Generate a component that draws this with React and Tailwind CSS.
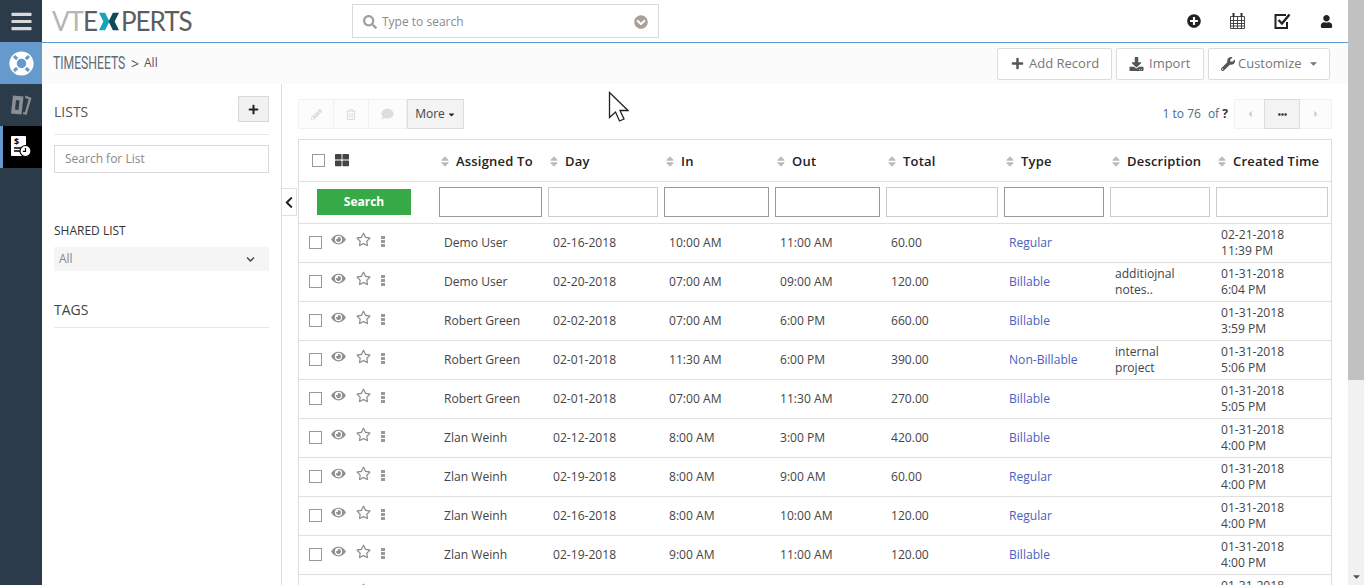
import React from "react";
import {
  FaBars, FaPlus, FaDownload, FaWrench, FaCaretDown, FaPencilAlt, FaRegTrashAlt, FaComment,
  FaEye, FaRegStar, FaEllipsisH, FaThLarge, FaChevronLeft, FaSearch, FaChevronCircleDown,
  FaPlusCircle, FaUser, FaLifeRing, FaCaretLeft, FaCaretRight, FaSort, FaChevronDown,
} from "react-icons/fa";

const font = "font-['Open_Sans',sans-serif]";
const cols = "grid grid-cols-[135px_109px_116px_111px_111px_118px_106px_106px_120px]";

const headers = ["Assigned To", "Day", "In", "Out", "Total", "Type", "Description", "Created Time"];

const rows = [
  ["Demo User", "02-16-2018", "10:00 AM", "11:00 AM", "60.00", "Regular", "", "02-21-2018", "11:39 PM"],
  ["Demo User", "02-20-2018", "07:00 AM", "09:00 AM", "120.00", "Billable", "additiojnal notes..", "01-31-2018", "6:04 PM"],
  ["Robert Green", "02-02-2018", "07:00 AM", "6:00 PM", "660.00", "Billable", "", "01-31-2018", "3:59 PM"],
  ["Robert Green", "02-01-2018", "11:30 AM", "6:00 PM", "390.00", "Non-Billable", "internal project", "01-31-2018", "5:06 PM"],
  ["Robert Green", "02-01-2018", "07:00 AM", "11:30 AM", "270.00", "Billable", "", "01-31-2018", "5:05 PM"],
  ["Zlan Weinh", "02-12-2018", "8:00 AM", "3:00 PM", "420.00", "Billable", "", "01-31-2018", "4:00 PM"],
  ["Zlan Weinh", "02-19-2018", "8:00 AM", "9:00 AM", "60.00", "Regular", "", "01-31-2018", "4:00 PM"],
  ["Zlan Weinh", "02-16-2018", "8:00 AM", "10:00 AM", "120.00", "Regular", "", "01-31-2018", "4:00 PM"],
  ["Zlan Weinh", "02-19-2018", "9:00 AM", "11:00 AM", "120.00", "Billable", "", "01-31-2018", "4:00 PM"],
  ["Zlan Weinh", "02-19-2018", "9:00 AM", "11:00 AM", "120.00", "Billable", "", "01-31-2018", "4:00 PM"],
];

const Sidebar = () => (
  <div className="w-[42px] shrink-0 bg-[#2c3b49] flex flex-col">
    <div className="h-[42px] flex items-center justify-center text-[#d9d9d9]">
      <FaBars className="w-[23px] h-[23px]" />
    </div>
    <div className="h-[42px] bg-[#6699cc] flex items-center justify-center text-white">
      <FaLifeRing className="w-[25px] h-[25px]" />
    </div>
    <div className="h-[42px] flex items-center justify-center">
      <svg width="22" height="22" viewBox="0 0 22 22">
        <path fillRule="evenodd" d="M3 1.5L13.5 2.5L11.5 20.5L1 19.5zM6 6L9.5 6.5L8.5 16L5 15.5z" fill="#8a8f94" />
        <path d="M15.5 1.5L21.5 4L16.5 21L12.8 20L13.5 18L15 18.3L18.6 5.2L15 4z" fill="#8a8f94" />
      </svg>
    </div>
    <div className="h-[42px] bg-black border-l-[3px] border-[#6699cc] flex items-center justify-center pr-[3px]">
      <svg width="22" height="22" viewBox="0 0 22 22">
        <rect x="1" y="0" width="15" height="20" rx="1" fill="#fff" />
        <text x="4" y="9" fontSize="9" fontWeight="700" fontFamily="Open Sans" fill="#000">$</text>
        <path d="M4 12h8M4 15h8" stroke="#000" strokeWidth="1.6" />
        <circle cx="15.5" cy="15" r="5.5" fill="#fff" stroke="#000" strokeWidth="1.2" />
        <path d="M15.5 12v3.4h-2.6" fill="none" stroke="#000" strokeWidth="1.2" />
      </svg>
    </div>
  </div>
);

const TopBar = () => (
  <div className="h-[43px] border-b border-[#5b99cc] bg-white flex items-center shrink-0">
    <div className="w-[310px] pl-[10px] flex items-center text-[26px] leading-none font-['Lato',sans-serif] tracking-[-1px]">
      <span className="text-[#b5b5b5]">VT</span>
      <span className="text-[#5b5e61]">E</span>
      <svg width="20" height="19" viewBox="0 0 23 20" className="mx-[2px]">
        <path d="M0 0h7l5 10-5 10H0l5-10z" fill="#19a3b5" />
        <path d="M23 0h-7l-5 10 5 10h7l-5-10z" fill="#0e4a5c" />
      </svg>
      <span className="text-[#5b5e61]">PERTS</span>
    </div>
    <div className="w-[307px] h-[34px] border border-[#d9d9d9] flex items-center pl-[10px] pr-[10px] pt-[1px]">
      <FaSearch className="w-[14px] h-[14px] text-[#a0a0a0]" />
      <span className="ml-[5px] text-[12px] text-[#8a8a8a] flex-1">Type to search</span>
      <FaChevronCircleDown className="w-[14px] h-[14px] text-[#a89f97]" />
    </div>
    <div className="ml-auto flex items-center gap-[29px] pr-[15px] text-[#222]">
      <FaPlusCircle className="w-[14px] h-[14px]" />
      <svg width="15" height="16" viewBox="0 0 15 16" fill="none" stroke="#333">
        <path d="M.5 3.5h14v12H.5zM.5 7.5h14M.5 10.5h14M.5 13h14M3.5 3.5v12M7.5 3.5v12M11.5 3.5v12" strokeWidth="0.9" />
        <path d="M3.5 0v4M11.5 0v4" strokeWidth="2" />
      </svg>
      <svg width="17" height="17" viewBox="0 0 17 17" fill="none" stroke="#222">
        <path d="M13 9v6H1.5V2H12" strokeWidth="2" />
        <path d="M4.5 7l3.5 3.5L15.5 1.5" strokeWidth="2.4" />
      </svg>
      <FaUser className="w-[13px] h-[13px]" />
    </div>
  </div>
);

const Crumbs = () => (
  <div className="h-[41px] bg-[#fbfbfb] flex items-center pl-[11px] pr-[18px] shrink-0">
    <span className="w-[72px] whitespace-nowrap origin-left scale-x-[0.64] font-['Roboto',sans-serif] text-[19px] text-[#5f6b77]">TIMESHEETS</span>
    <span className="ml-[6px] text-[14px] text-[#555]">&gt;</span>
    <span className="ml-[5px] mb-[2px] text-[12px] text-[#555]">All</span>
    <div className="ml-auto flex items-center gap-[4px]">
      <div className="h-[32px] w-[115px] pl-[13px] border border-[#dcdcdc] rounded-[2px] bg-white flex items-center gap-[5px] text-[13px] text-[#777]">
        <FaPlus className="w-[13px] h-[13px] text-[#555]" />
        <span>Add Record</span>
      </div>
      <div className="h-[32px] w-[88px] pl-[12px] border border-[#dcdcdc] rounded-[2px] bg-white flex items-center gap-[5px] text-[13px] text-[#777]">
        <FaDownload className="w-[15px] h-[14px] text-[#555]" />
        <span>Import</span>
      </div>
      <div className="h-[32px] w-[122px] pl-[12px] border border-[#dcdcdc] rounded-[2px] bg-white flex items-center gap-[3px] text-[13px] text-[#777]">
        <FaWrench className="w-[14px] h-[14px] text-[#555]" />
        <span>Customize</span>
        <FaCaretDown className="w-[11px] h-[11px] ml-[3px]" />
      </div>
    </div>
  </div>
);

const LeftPanel = () => (
  <div className="w-[240px] shrink-0 border-r border-[#dedede] pl-[12px] pr-[12px] pt-[12px]">
    <div className="flex items-start justify-between border-b border-[#e8e8e8] h-[39px]">
      <span className="text-[14px] text-[#555] mt-[5px]">LISTS</span>
      <div className="w-[31px] h-[26px] bg-[#f1f1f1] border border-[#d8d8d8] flex items-center justify-center">
        <FaPlus className="w-[11px] h-[11px] text-[#222]" />
      </div>
    </div>
    <div className="mt-[10px] h-[28px] border border-[#d9d9d9] flex items-center pl-[10px] text-[12px] text-[#888]">
      Search for List
    </div>
    <div className="mt-[49px] text-[12px] text-[#333] leading-[17px]">SHARED LIST</div>
    <div className="mt-[8px] h-[24px] bg-[#f5f5f5] flex items-center justify-between pl-[5px] pr-[14px] text-[12px] text-[#888]">
      All
      <FaChevronDown className="w-[9px] h-[9px] text-[#444]" />
    </div>
    <div className="mt-[28px] h-[29px] border-b border-[#e8e8e8] text-[14px] text-[#444]">TAGS</div>
  </div>
);

const Toolbar = () => (
  <div className="h-[30px] flex items-center mb-[10px]">
    <div className="flex h-[30px] border border-[#f1f1f1] bg-[#fcfcfc] text-[#dddddd]">
      <div className="w-[35px] flex items-center justify-center border-r border-[#f1f1f1]"><FaPencilAlt className="w-[11px] h-[11px]" /></div>
      <div className="w-[35px] flex items-center justify-center border-r border-[#f1f1f1]"><FaRegTrashAlt className="w-[10px] h-[11px]" /></div>
      <div className="w-[37px] flex items-center justify-center"><FaComment className="w-[13px] h-[12px]" /></div>
    </div>
    <div className="w-[57px] h-[30px] bg-[#f3f3f3] border border-[#dcdcdc] flex items-center justify-center gap-[2px] text-[12px] text-[#444]">
      More <FaCaretDown className="w-[9px] h-[9px] text-[#222]" />
    </div>
    <div className="ml-auto flex items-center text-[12px] text-[#4a6a8a]">
      <span>1 to 76</span>
      <span className="ml-[7px]">of <b className="text-[#333]">?</b></span>
      <div className="ml-[6px] flex h-[30px] border border-[#f1f1f1] bg-[#fcfcfc] text-[#d0d0d0]">
        <div className="w-[29px] flex items-center justify-center"><FaCaretLeft className="w-[10px] h-[10px]" /></div>
        <div className="w-[36px] bg-[#f3f3f3] border border-[#dcdcdc] -my-px flex items-center justify-center text-[#333]"><FaEllipsisH className="w-[9px] h-[9px]" /></div>
        <div className="w-[31px] flex items-center justify-center"><FaCaretRight className="w-[10px] h-[10px]" /></div>
      </div>
    </div>
  </div>
);

const Checkbox = () => <div className="w-[13px] h-[13px] border border-[#999] bg-white" />;

const Dots = () => (
  <div className="flex flex-col gap-[1px]">
    <span className="w-[4px] h-[3px] bg-[#999]" />
    <span className="w-[4px] h-[3px] bg-[#999]" />
    <span className="w-[4px] h-[3px] bg-[#999]" />
  </div>
);

const Row = ({ row }) => {
  const [user, day, from, to, total, type, desc, date, time] = row;
  return (
    <div className={`${cols} h-[39px] border-b border-[#e0e0e0] text-[12.1px] text-[#444] leading-[16px] items-center`}>
      <div className="flex items-center pl-[10px] h-full pb-[1px]">
        <Checkbox />
        <FaEye className="ml-[9px] mb-[6px] w-[15px] h-[13px] text-[#8f8f8f]" />
        <FaRegStar className="ml-[10px] mb-[6px] w-[15px] h-[15px] text-[#8f8f8f]" />
        <div className="ml-[10px] mb-[2px]"><Dots /></div>
      </div>
      <div className="pl-[10px]">{user}</div>
      <div className="pl-[10px]">{day}</div>
      <div className="pl-[10px]">{from}</div>
      <div className="pl-[10px]">{to}</div>
      <div className="pl-[10px]">{total}</div>
      <div className="pl-[10px] text-[#4a5fc1]">{type}</div>
      <div className="pl-[10px] pr-[14px]">{desc}</div>
      <div className="pl-[10px]">{date}<br />{time}</div>
    </div>
  );
};

const Table = () => (
  <div className="border-t border-l border-r border-[#dddddd] w-[1034px]">
    <div className={`${cols} h-[42px] border-b border-[#e0e0e0] items-center text-[13px] font-semibold text-[#222] tracking-[0.2px]`}>
      <div className="flex items-center pl-[13px] gap-[10px]">
        <Checkbox />
        <FaThLarge className="w-[14px] h-[14px] text-[#444] mb-[2px]" />
      </div>
      {headers.map((h) => (
        <div key={h} className="flex items-center pl-[7px] pt-[2px] gap-[7px] whitespace-nowrap">
          <FaSort className="w-[8px] h-[13px] text-[#bbb]" />
          {h}
        </div>
      ))}
    </div>
    <div className={`${cols} h-[42px] pb-[1px] border-b border-[#e0e0e0] items-center`}>
      <div className="pl-[18px]">
        <div className="w-[94px] h-[26px] bg-[#35aa47] text-white text-[12px] font-bold flex items-center justify-center">Search</div>
      </div>
      <div className="pl-[5px]"><div className="w-[103px] h-[30px] border border-[#999]" /></div>
      <div className="pl-[5px]"><div className="w-[110px] h-[30px] border border-[#ccc]" /></div>
      <div className="pl-[5px]"><div className="w-[105px] h-[30px] border border-[#999]" /></div>
      <div className="pl-[5px]"><div className="w-[105px] h-[30px] border border-[#999]" /></div>
      <div className="pl-[5px]"><div className="w-[112px] h-[30px] border border-[#ccc]" /></div>
      <div className="pl-[5px]"><div className="w-[100px] h-[30px] border border-[#999]" /></div>
      <div className="pl-[5px]"><div className="w-[100px] h-[30px] border border-[#ccc]" /></div>
      <div className="pl-[5px]"><div className="w-[112px] h-[30px] border border-[#ccc]" /></div>
    </div>
    {rows.map((row, i) => <Row key={i} row={row} />)}
  </div>
);

const Scrollbar = () => (
  <div className="w-[16px] shrink-0 h-full bg-[#f1f1f1] flex flex-col">
    <div className="h-[380px] bg-[#c1c1c1]" />
    <div className="mt-auto h-[17px] flex items-center justify-center">
      <FaCaretDown className="w-[11px] h-[11px] text-[#505050]" />
    </div>
  </div>
);

export default function App() {
  return (
    <div className={`${font} relative w-[1364px] h-[585px] overflow-hidden flex bg-white`}>
      <Sidebar />
      <div className="flex-1 flex flex-col min-w-0 h-full">
        <TopBar />
        <Crumbs />
        <div className="flex flex-1 min-h-0">
          <LeftPanel />
          <div className="relative flex-1 pl-[16px] pr-[16px] pt-[15px] overflow-hidden">
            <div className="absolute left-0 top-[104px] w-[15px] h-[28px] bg-white border border-l-0 border-[#e0e0e0] flex items-center justify-center">
              <FaChevronLeft className="w-[10px] h-[13px] text-[#222]" />
            </div>
            <Toolbar />
            <Table />
          </div>
        </div>
      </div>
      <Scrollbar />
      <svg className="absolute left-[608px] top-[91px]" width="21" height="32" viewBox="0 0 21 32">
        <path d="M1.5 1.5v25l6-5.5 4 9 4.5-2-4-8.5h8z" fill="#fff" stroke="#222" strokeWidth="1.3" />
      </svg>
    </div>
  );
}
